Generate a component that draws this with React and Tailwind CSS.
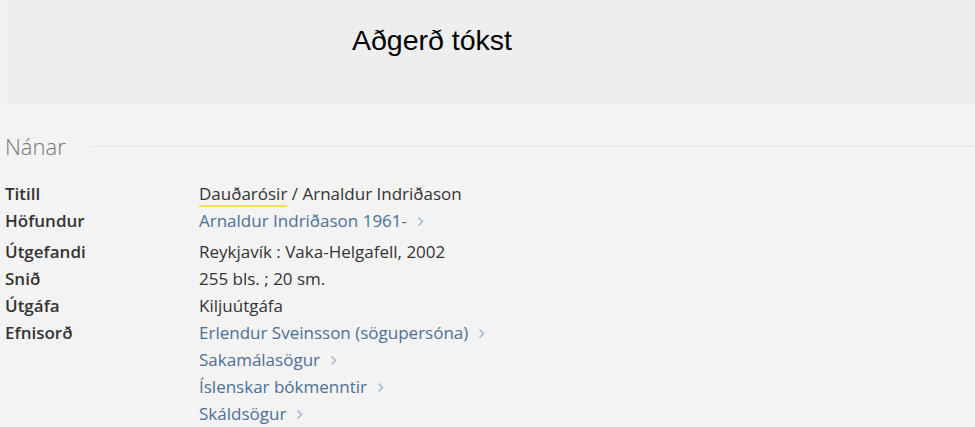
const bodyFont = { fontFamily: "'Open Sans', 'Noto Sans', sans-serif" };

function Chevron() {
	return (
		<svg width="7" height="11" viewBox="0 0 7 11" className="ml-[10px] mt-[2px]" fill="none">
			<polyline points="1.5,1.5 5.5,5.5 1.5,9.5" stroke="#a3b8d2" strokeWidth="1.6" />
		</svg>
	);
}

function Link({ children }) {
	return (
		<span className="inline-flex items-center text-[#4d6f98]">
			{children}
			<Chevron />
		</span>
	);
}

const rows = [
	{
		label: "Titill",
		value: (
			<span>
				<span className="border-b-2 border-[#f7dc55]">Dauðarósir</span> / Arnaldur Indriðason
			</span>
		),
	},
	{ label: "Höfundur", value: <Link>Arnaldur Indriðason 1961-</Link> },
	{ label: "Útgefandi", value: "Reykjavík : Vaka-Helgafell, 2002", gap: true },
	{ label: "Snið", value: "255 bls. ; 20 sm." },
	{ label: "Útgáfa", value: "Kiljuútgáfa" },
];

const subjects = [
	"Erlendur Sveinsson (sögupersóna)",
	"Sakamálasögur",
	"Íslenskar bókmenntir",
	"Skáldsögur",
];

export default function App() {
	return (
		<div className="min-h-[427px] bg-[#f3f3f3] overflow-hidden">
			{/* Status banner */}
			<div className="ml-[7px] h-[104px] bg-[#eeeeee] pl-[345px] pt-[24px]">
				<p className="text-[28.5px] leading-8 text-black" style={{ fontFamily: "'Liberation Sans', Arial, sans-serif" }}>
					Aðgerð tókst
				</p>
			</div>

			<div className="pl-[5px]" style={bodyFont}>
				{/* Section heading */}
				<div className="flex items-center mt-[28px]">
					<h2 className="text-[22px] leading-7 font-light text-[#777777]">Nánar</h2>
					<div className="flex-1 ml-[26px] h-px bg-[#e2e2e2]" />
				</div>

				{/* Detail rows */}
				<div className="mt-[20px] text-[17px] leading-[27px]">
					{rows.map((r) => (
						<div key={r.label} className={`flex ${r.gap ? "mt-1" : ""}`}>
							<div className="w-[194px] font-semibold text-[#333333]">{r.label}</div>
							<div className="text-[#333333]">{r.value}</div>
						</div>
					))}
					<div className="flex">
						<div className="w-[194px] font-semibold text-[#333333]">Efnisorð</div>
						<div className="flex flex-col">
							{subjects.map((s) => (
								<Link key={s}>{s}</Link>
							))}
						</div>
					</div>
				</div>
			</div>
		</div>
	);
}
